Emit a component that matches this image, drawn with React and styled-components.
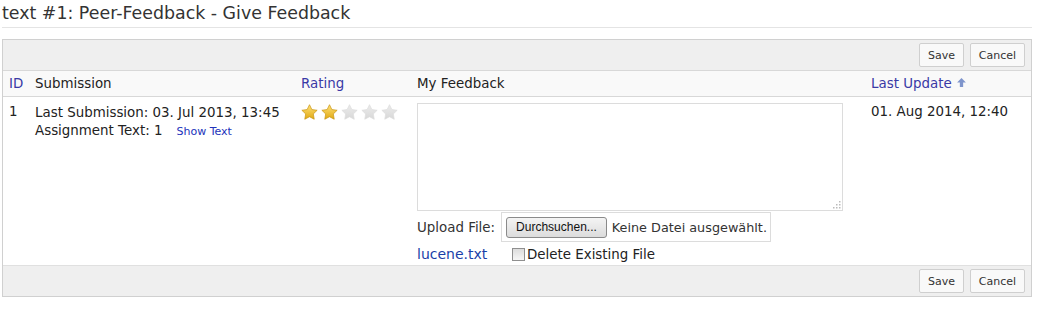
import styled, { createGlobalStyle } from "styled-components";

const GlobalStyle = createGlobalStyle`
  body {
    margin: 0;
    background: #fff;
    font-family: "DejaVu Sans", Verdana, sans-serif;
    font-size: 13.4px;
    color: #222;
  }
`;

const Page = styled.div`
  padding: 0 6px 0 2px;
`;

const Title = styled.h1`
  margin: 0;
  padding: 3px 0 4px 0;
  font-size: 17.4px;
  font-weight: normal;
  color: #333;
  border-bottom: 1px solid #e4e4e4;
`;

const Panel = styled.div`
  margin-top: 11px;
  border: 1px solid #d0d0d0;
  width: 1028px;
`;

const Toolbar = styled.div`
  display: flex;
  justify-content: flex-end;
  gap: 6px;
  padding: 3px 6px 3px 0;
  background: #efefef;
  border-top: ${(p) => (p.bottom ? "1px solid #e0e0e0" : "none")};
`;

const Button = styled.button`
  width: ${(p) => p.w}px;
  height: 24px;
  padding: 0;
  background: #f9f9f9;
  border: 1px solid #cfcfcf;
  border-radius: 2px;
  font-family: "DejaVu Sans", Verdana, sans-serif;
  font-size: 11px;
  color: #333;
`;

const Table = styled.table`
  width: 100%;
  border-collapse: collapse;
  table-layout: fixed;
`;

const HeadRow = styled.tr`
  background: #f9f9f9;
  border-top: 1px solid #d8d8d8;
  border-bottom: 1px solid #d8d8d8;
`;

const Th = styled.th`
  height: 25px;
  padding: 0 6px;
  text-align: left;
  font-weight: normal;
  color: ${(p) => (p.link ? "#3a3aa6" : "#222")};
  white-space: nowrap;
`;

const Td = styled.td`
  vertical-align: top;
  padding: ${(p) => p.pad || "7px 6px 0 6px"};
  white-space: nowrap;
`;

const Line = styled.div`
  line-height: 18px;
`;

const SmallLink = styled.a`
  margin-left: 14px;
  font-size: 11px;
  color: #2233bb;
  text-decoration: none;
`;

const Stars = styled.div`
  display: flex;
  gap: 3px;
`;

const TextArea = styled.div`
  width: 424px;
  height: 106px;
  border: 1px solid #dcdcdc;
  position: relative;
`;

const Grip = styled.svg`
  position: absolute;
  right: 1px;
  bottom: 1px;
`;

const UploadRow = styled.div`
  display: flex;
  align-items: center;
  gap: 6px;
  margin-top: 1px;
  color: #333;
`;

const FileBox = styled.div`
  display: flex;
  align-items: center;
  gap: 5px;
  height: 28px;
  padding: 0 3px 0 4px;
  border: 1px solid #dcdcdc;
  font-size: 12.8px;
`;

const BrowseButton = styled.div`
  height: 19px;
  padding: 0 9px;
  line-height: 19px;
  font-family: "Liberation Sans", Arial, sans-serif;
  font-size: 12px;
  color: #111;
  border: 1px solid #8a8a8a;
  border-radius: 3px;
  background: linear-gradient(#f4f4f4, #dcdcdc);
`;

const ExistingRow = styled.div`
  display: flex;
  align-items: center;
  margin-top: 1px;
  height: 22px;
`;

const FileLink = styled.a`
  width: 95px;
  font-size: 14px;
  color: #1a3fa8;
  text-decoration: none;
`;

const Check = styled.span`
  width: 11px;
  height: 11px;
  margin-right: 2px;
  border: 1px solid #8f8f8f;
  background: linear-gradient(#dcdcdc, #f6f6f6);
`;

const Star = ({ on }) => (
  <svg width="17" height="16" viewBox="0 0 24 23">
    <defs>
      <linearGradient id={on ? "gOn" : "gOff"} x1="0" y1="0" x2="0" y2="1">
        <stop offset="0" stopColor={on ? "#ffe27a" : "#ececec"} />
        <stop offset="1" stopColor={on ? "#e0a812" : "#d8d8d8"} />
      </linearGradient>
    </defs>
    <path
      d="M12 1l3.4 7 7.6 1-5.5 5.3 1.3 7.6L12 18.3 5.2 21.9l1.3-7.6L1 9l7.6-1z"
      fill={`url(#${on ? "gOn" : "gOff"})`}
      stroke={on ? "#c89412" : "#dcdcdc"}
      strokeWidth="1"
    />
  </svg>
);

export default function App() {
  return (
    <Page>
      <GlobalStyle />
      <Title>text #1: Peer-Feedback - Give Feedback</Title>
      <Panel>
        <Toolbar>
          <Button w={45}>Save</Button>
          <Button w={55}>Cancel</Button>
        </Toolbar>
        <Table>
          <colgroup>
            <col style={{ width: 26 }} />
            <col style={{ width: 266 }} />
            <col style={{ width: 116 }} />
            <col style={{ width: 454 }} />
            <col />
          </colgroup>
          <thead>
            <HeadRow>
              <Th link>ID</Th>
              <Th>Submission</Th>
              <Th link>Rating</Th>
              <Th>My Feedback</Th>
              <Th link>
                Last Update{" "}
                <svg width="11" height="11" viewBox="0 0 10 10">
                  <path d="M5 1L1 5h2.5v4h3V5H9z" fill="#7f95cc" />
                </svg>
              </Th>
            </HeadRow>
          </thead>
          <tbody>
            <tr>
              <Td>1</Td>
              <Td>
                <Line>Last Submission: 03. Jul 2013, 13:45</Line>
                <Line>
                  Assignment Text: 1<SmallLink>Show Text</SmallLink>
                </Line>
              </Td>
              <Td>
                <Stars>
                  {[1, 2, 3, 4, 5].map((n) => (
                    <Star key={n} on={n <= 2} />
                  ))}
                </Stars>
              </Td>
              <Td pad="6px 6px 0 6px">
                <TextArea>
                  <Grip width="10" height="8" viewBox="0 0 10 8">
                    <rect x="8" y="0" width="1.5" height="1.5" fill="#bbb" />
                    <rect x="5" y="3" width="1.5" height="1.5" fill="#bbb" />
                    <rect x="8" y="3" width="1.5" height="1.5" fill="#bbb" />
                    <rect x="2" y="6" width="1.5" height="1.5" fill="#bbb" />
                    <rect x="5" y="6" width="1.5" height="1.5" fill="#bbb" />
                    <rect x="8" y="6" width="1.5" height="1.5" fill="#bbb" />
                  </Grip>
                </TextArea>
                <UploadRow>
                  Upload File:
                  <FileBox>
                    <BrowseButton>Durchsuchen...</BrowseButton>
                    Keine Datei ausgewählt.
                  </FileBox>
                </UploadRow>
                <ExistingRow>
                  <FileLink>lucene.txt</FileLink>
                  <Check />
                  Delete Existing File
                </ExistingRow>
              </Td>
              <Td>01. Aug 2014, 12:40</Td>
            </tr>
          </tbody>
        </Table>
        <Toolbar bottom>
          <Button w={45}>Save</Button>
          <Button w={55}>Cancel</Button>
        </Toolbar>
      </Panel>
    </Page>
  );
}
